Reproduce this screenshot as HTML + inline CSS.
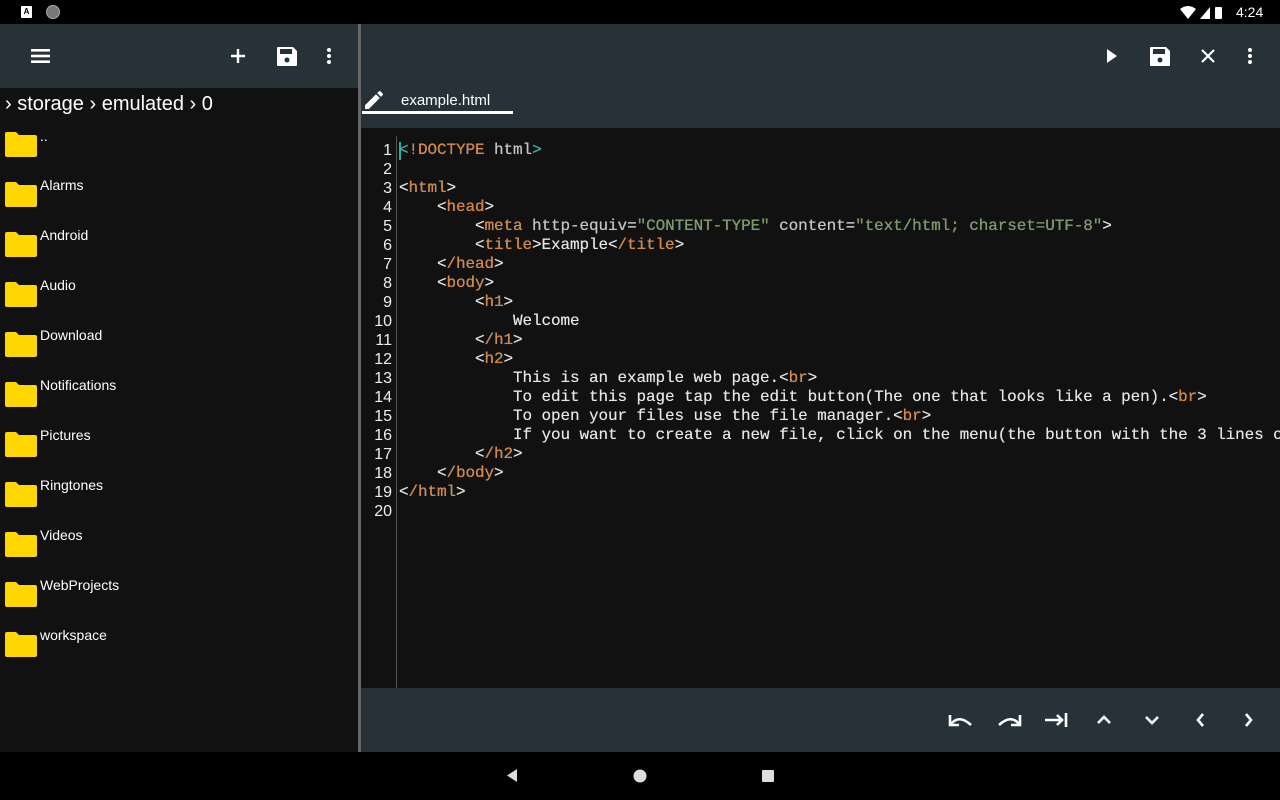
<!DOCTYPE html>
<html><head><style>
*{margin:0;padding:0;box-sizing:border-box}
body{width:1280px;height:800px;background:#000;position:relative;overflow:hidden;font-family:"Liberation Sans",sans-serif}
.abs{position:absolute}
.tb{background:#263238}
.item{position:absolute;left:0;height:50px;width:358px}
.item svg{position:absolute;left:4px;top:0}
.item span{position:absolute;left:40px;top:-2px;color:#fff;font-size:14px}
pre{position:absolute;left:399px;top:141px;font-family:"Liberation Mono",monospace;font-size:16px;letter-spacing:-0.1px;line-height:19px;color:#e6e6e6;white-space:pre;text-shadow:0 0 0.4px #e6e6e6}
.g{position:absolute;left:362px;top:141px;width:30px;text-align:right;font-family:"Liberation Sans",sans-serif;font-size:16px;line-height:19px;color:#eee}
.t{color:#d8843a}.s{color:#789a62}.a{color:#c4c4c4}.c{color:#20b2aa}
</style></head><body>
<div class="abs" style="left:0;top:0;width:1280px;height:24px;background:#000"></div>
<div class="abs" style="left:21px;top:6px;width:11px;height:12px;background:#fff;border-radius:1px;font-size:8px;text-align:center;font-weight:bold;line-height:12px">A</div>
<div class="abs" style="left:46px;top:5px;width:14px;height:14px;border-radius:50%;background:#777;border:1px solid #aaa"></div>
<svg class="abs" style="left:1178px;top:5px" width="90" height="16"><path d="M2 4 Q10 -2 18 4 L10 14Z" fill="#fff"/><path d="M22 14 L32 2 L32 14Z" fill="#fff"/><rect x="37" y="2" width="7" height="12" rx="1" fill="#fff"/></svg>
<div class="abs" style="left:1236px;top:4px;color:#fff;font-size:14px">4:24</div>
<div class="abs tb" style="left:0;top:24px;width:358px;height:64px"></div>
<div class="abs" style="left:358px;top:24px;width:3px;height:728px;background:#666"></div>
<div class="abs tb" style="left:361px;top:24px;width:919px;height:104px"></div>
<svg class="abs" style="left:0;top:24px" width="358" height="64">
<rect x="31" y="25" width="19" height="2.6" fill="#fff"/><rect x="31" y="30.7" width="19" height="2.6" fill="#fff"/><rect x="31" y="36.4" width="19" height="2.6" fill="#fff"/>
<path d="M238 25v14M231 32h14" stroke="#fff" stroke-width="2.4"/>
<path d="M278 23h15l4 4v14a1 1 0 0 1-1 1h-18a1 1 0 0 1-1-1v-17a1 1 0 0 1 1-1z" fill="#fff"/><rect x="280" y="25" width="12" height="5" fill="#263238"/><circle cx="287" cy="36" r="2.5" fill="#263238"/>
<circle cx="329" cy="26" r="2" fill="#fff"/><circle cx="329" cy="32" r="2" fill="#fff"/><circle cx="329" cy="38" r="2" fill="#fff"/>
</svg>
<svg class="abs" style="left:1090px;top:24px" width="190" height="64">
<path d="M17 25l10 7-10 7z" fill="#fff"/>
<path d="M61 23h15l4 4v14a1 1 0 0 1-1 1h-18a1 1 0 0 1-1-1v-17a1 1 0 0 1 1-1z" fill="#fff"/><rect x="63" y="25" width="12" height="5" fill="#263238"/><circle cx="70" cy="36" r="2.5" fill="#263238"/>
<path d="M112 26l12 12M124 26l-12 12" stroke="#fff" stroke-width="2.2"/>
<circle cx="160" cy="26" r="2" fill="#fff"/><circle cx="160" cy="32" r="2" fill="#fff"/><circle cx="160" cy="38" r="2" fill="#fff"/>
</svg>
<svg class="abs" style="left:362px;top:88px" width="24" height="24"><path d="M3 17.2V21h3.8L17.8 10l-3.8-3.8zM20.7 7a1 1 0 0 0 0-1.4l-2.3-2.3a1 1 0 0 0-1.4 0l-1.8 1.8 3.8 3.8z" fill="#fff"/></svg>
<div class="abs" style="left:401px;top:92px;color:#fff;font-size:15px">example.html</div>
<div class="abs" style="left:362px;top:111px;width:151px;height:3px;background:#fff"></div>
<div class="abs" style="left:0;top:88px;width:358px;height:664px;background:#111"></div>
<div class="abs" style="left:5px;top:93px;color:#fff;font-size:20px">› storage › emulated › 0</div>
<div class="abs" style="left:0;top:130px">
<div class="item" style="top:0"><svg width="34" height="28"><path d="M1 4a2 2 0 0 1 2-2h9l3 3h16a2 2 0 0 1 2 2v18a2 2 0 0 1-2 2H3a2 2 0 0 1-2-2z" fill="#ffd600"/></svg><span>..</span></div>
<div class="item" style="top:50px"><svg width="34" height="28"><path d="M1 4a2 2 0 0 1 2-2h9l3 3h16a2 2 0 0 1 2 2v18a2 2 0 0 1-2 2H3a2 2 0 0 1-2-2z" fill="#ffd600"/></svg><span style="top:-3px">Alarms</span></div>
<div class="item" style="top:100px"><svg width="34" height="28"><path d="M1 4a2 2 0 0 1 2-2h9l3 3h16a2 2 0 0 1 2 2v18a2 2 0 0 1-2 2H3a2 2 0 0 1-2-2z" fill="#ffd600"/></svg><span style="top:-3px">Android</span></div>
<div class="item" style="top:150px"><svg width="34" height="28"><path d="M1 4a2 2 0 0 1 2-2h9l3 3h16a2 2 0 0 1 2 2v18a2 2 0 0 1-2 2H3a2 2 0 0 1-2-2z" fill="#ffd600"/></svg><span style="top:-3px">Audio</span></div>
<div class="item" style="top:200px"><svg width="34" height="28"><path d="M1 4a2 2 0 0 1 2-2h9l3 3h16a2 2 0 0 1 2 2v18a2 2 0 0 1-2 2H3a2 2 0 0 1-2-2z" fill="#ffd600"/></svg><span style="top:-3px">Download</span></div>
<div class="item" style="top:250px"><svg width="34" height="28"><path d="M1 4a2 2 0 0 1 2-2h9l3 3h16a2 2 0 0 1 2 2v18a2 2 0 0 1-2 2H3a2 2 0 0 1-2-2z" fill="#ffd600"/></svg><span style="top:-3px">Notifications</span></div>
<div class="item" style="top:300px"><svg width="34" height="28"><path d="M1 4a2 2 0 0 1 2-2h9l3 3h16a2 2 0 0 1 2 2v18a2 2 0 0 1-2 2H3a2 2 0 0 1-2-2z" fill="#ffd600"/></svg><span style="top:-3px">Pictures</span></div>
<div class="item" style="top:350px"><svg width="34" height="28"><path d="M1 4a2 2 0 0 1 2-2h9l3 3h16a2 2 0 0 1 2 2v18a2 2 0 0 1-2 2H3a2 2 0 0 1-2-2z" fill="#ffd600"/></svg><span style="top:-3px">Ringtones</span></div>
<div class="item" style="top:400px"><svg width="34" height="28"><path d="M1 4a2 2 0 0 1 2-2h9l3 3h16a2 2 0 0 1 2 2v18a2 2 0 0 1-2 2H3a2 2 0 0 1-2-2z" fill="#ffd600"/></svg><span style="top:-3px">Videos</span></div>
<div class="item" style="top:450px"><svg width="34" height="28"><path d="M1 4a2 2 0 0 1 2-2h9l3 3h16a2 2 0 0 1 2 2v18a2 2 0 0 1-2 2H3a2 2 0 0 1-2-2z" fill="#ffd600"/></svg><span style="top:-3px">WebProjects</span></div>
<div class="item" style="top:500px"><svg width="34" height="28"><path d="M1 4a2 2 0 0 1 2-2h9l3 3h16a2 2 0 0 1 2 2v18a2 2 0 0 1-2 2H3a2 2 0 0 1-2-2z" fill="#ffd600"/></svg><span style="top:-3px">workspace</span></div>
</div>
<div class="abs" style="left:361px;top:128px;width:919px;height:560px;background:#111"></div>
<div class="abs" style="left:396px;top:136px;width:1px;height:552px;background:#555"></div>
<div class="g">1<br>2<br>3<br>4<br>5<br>6<br>7<br>8<br>9<br>10<br>11<br>12<br>13<br>14<br>15<br>16<br>17<br>18<br>19<br>20</div>
<div class="abs" style="left:399px;top:142px;width:2px;height:18px;background:#20b2aa"></div>
<pre><span class="c">&lt;</span><span class="t">!DOCTYPE</span> <span class="a">html</span><span class="c">&gt;</span>

&lt;<span class="t">html</span>&gt;
    &lt;<span class="t">head</span>&gt;
        &lt;<span class="t">meta</span> <span class="a">http-equiv</span>=<span class="s">"CONTENT-TYPE"</span> <span class="a">content</span>=<span class="s">"text/html; charset=UTF-8"</span>&gt;
        &lt;<span class="t">title</span>&gt;Example&lt;<span class="t">/title</span>&gt;
    &lt;<span class="t">/head</span>&gt;
    &lt;<span class="t">body</span>&gt;
        &lt;<span class="t">h1</span>&gt;
            Welcome
        &lt;<span class="t">/h1</span>&gt;
        &lt;<span class="t">h2</span>&gt;
            This is an example web page.&lt;<span class="t">br</span>&gt;
            To edit this page tap the edit button(The one that looks like a pen).&lt;<span class="t">br</span>&gt;
            To open your files use the file manager.&lt;<span class="t">br</span>&gt;
            If you want to create a new file, click on the menu(the button with the 3 lines on
        &lt;<span class="t">/h2</span>&gt;
    &lt;<span class="t">/body</span>&gt;
&lt;<span class="t">/html</span>&gt;
</pre>
<div class="abs tb" style="left:361px;top:688px;width:919px;height:64px"></div>
<svg class="abs" style="left:930px;top:688px" width="350" height="64" fill="none" stroke="#fff" stroke-width="2.6">
<path d="M20 27v10h9" /><path d="M21 36 Q29 26 41 37"/>
<path d="M90 27v10h-9"/><path d="M89 36 Q81 26 69 37"/>
<path d="M115 32h18M127 27l5 5-5 5M136 25v14"/>
<path d="M168 35l6-6 6 6"/>
<path d="M216 29l6 6 6-6"/>
<path d="M273 26l-5 6 5 6"/>
<path d="M316 26l5 6-5 6"/>
</svg>
<svg class="abs" style="left:0;top:752px" width="1280" height="48">
<path d="M517 17v13l-10-6.5z" fill="#ddd"/><circle cx="640" cy="24" r="6.5" fill="#ddd"/><rect x="762" y="18" width="12" height="12" rx="1" fill="#ddd"/>
</svg>
</body></html>
